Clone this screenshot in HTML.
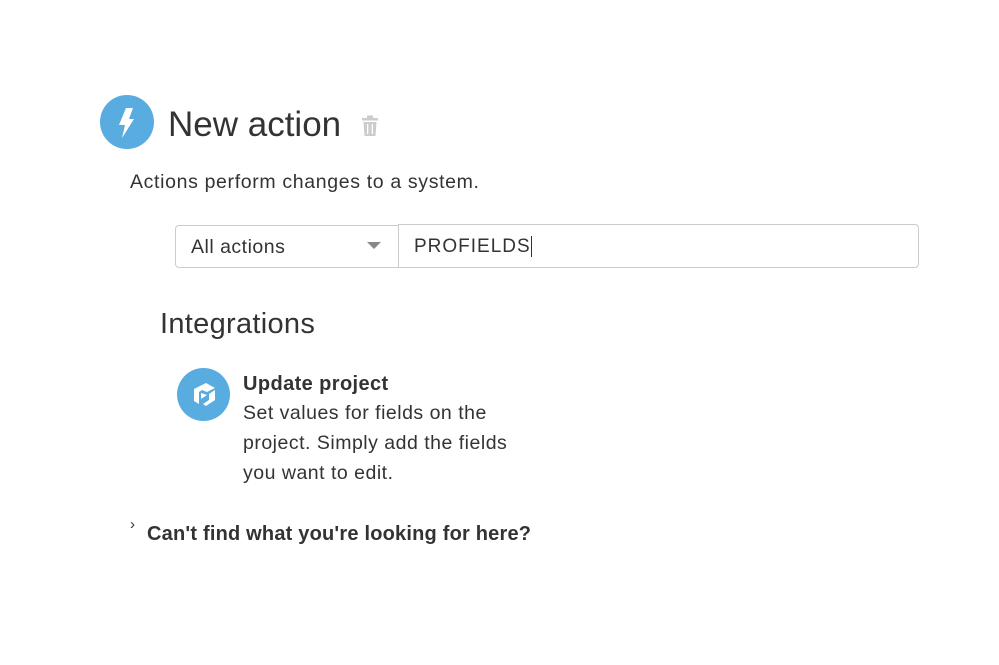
<!DOCTYPE html>
<html><head><style>
body{margin:0;width:999px;height:665px;background:#fff;font-family:"Liberation Sans",sans-serif;color:#333;position:relative;overflow:hidden}
.a{position:absolute;white-space:nowrap}
</style></head><body>
<div class="a" style="left:100px;top:95px;width:54px;height:54px;border-radius:50%;background:#59ace0">
<svg width="54" height="54" viewBox="0 0 54 54"><path d="M26 13 L33 13 L29 24 L34 24 L22 43 L25 30 L19 30 Z" fill="#fff"/></svg></div>
<div class="a" style="left:168px;top:105px;font-size:35px;color:#333">New action</div>
<svg class="a" style="left:361px;top:115px" width="18" height="22" viewBox="0 0 18 22"><rect x="1" y="3" width="16" height="2.5" fill="#ccc"/><rect x="6" y="0.5" width="6" height="3" fill="#ccc"/><path d="M2.5 7 H15.5 L14.5 21 H3.5 Z" fill="#ccc"/><rect x="6" y="9" width="1.3" height="10" fill="#fff"/><rect x="10.7" y="9" width="1.3" height="10" fill="#fff"/></svg>
<div class="a" style="left:130px;top:171px;font-size:19.5px;letter-spacing:0.65px">Actions perform changes to a system.</div>
<div class="a" style="left:175px;top:225px;width:222px;height:41px;border:1px solid #ccc;border-radius:4px 0 0 4px"></div>
<div class="a" style="left:191px;top:236px;font-size:19.5px;letter-spacing:0.5px">All actions</div>
<div class="a" style="left:367px;top:242px;width:0;height:0;border-left:7px solid transparent;border-right:7px solid transparent;border-top:7px solid #888"></div>
<div class="a" style="left:398px;top:224px;width:519px;height:42px;border:1.5px solid #ccc;border-radius:0 4px 4px 0"></div>
<div class="a" style="left:414px;top:236px;font-size:19px;letter-spacing:1px">PROFIELDS<span style="border-left:1px solid #333;margin-left:0"></span></div>
<div class="a" style="left:160px;top:308px;font-size:29px;letter-spacing:0.3px;color:#333">Integrations</div>
<div class="a" style="left:177px;top:368px;width:53px;height:53px;border-radius:50%;background:#59ace0">
<svg width="53" height="53" viewBox="0 0 53 53"><path d="M17 21 L29 15 L38 20 L30 24 L25 22 L22 24 V36 L17 33 Z" fill="#fff"/><path d="M38 22 V32 L29 38 L26 36 L32 32 V26 Z" fill="#fff"/><path d="M24 25 L30 27 L24 31 Z" fill="#fff"/></svg></div>
<div class="a" style="left:243px;top:373px;font-size:20px;letter-spacing:0.4px;font-weight:bold">Update project</div>
<div class="a" style="left:243px;top:398px;font-size:19.5px;letter-spacing:0.5px;line-height:30px">Set values for fields on the<br>project. Simply add the fields<br>you want to edit.</div>
<div class="a" style="left:130px;top:516px;font-size:15px">›</div>
<div class="a" style="left:147px;top:523px;font-size:20px;letter-spacing:0.2px;font-weight:bold">Can't find what you're looking for here?</div>
</body></html>
